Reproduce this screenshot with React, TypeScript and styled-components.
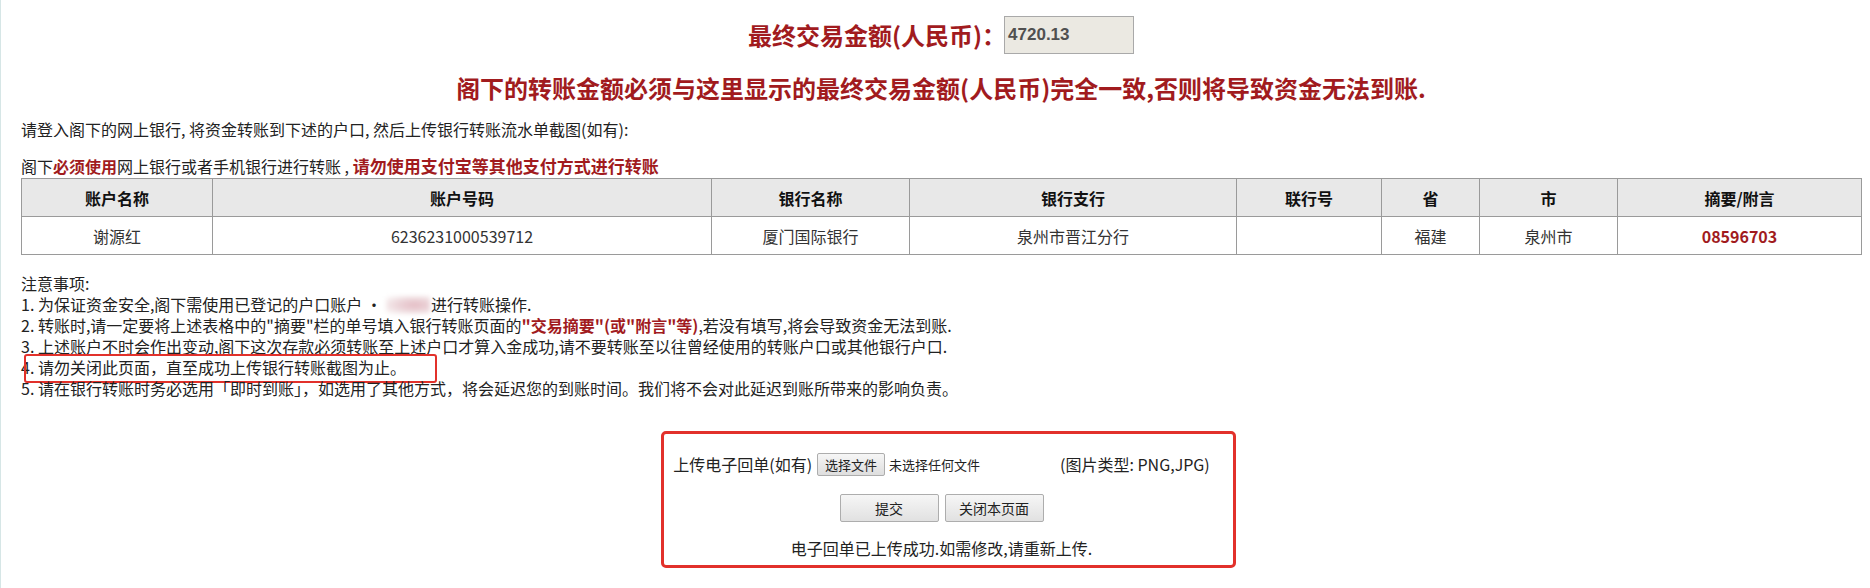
import { FC } from 'react';
import styled, { createGlobalStyle } from 'styled-components';

const GlobalStyle = createGlobalStyle`
	html,
	body {
		margin: 0;
		padding: 0;
		background: #fff;
	}

	body {
		font-family: 'Noto Sans CJK SC', 'Liberation Sans', sans-serif;
		font-size: 16px;
		color: #222;
		border-left: 1px solid #d6e6e6;
	}
`;

const RED = '#a11b1e';
const MARK = '#e2312b';

const Page = styled.div`
	padding: 16px 9px 20px 20px;
	white-space: nowrap;
`;

const TitleRow = styled.div`
	display: flex;
	justify-content: center;
	align-items: center;
	height: 38px;
`;

const TitleText = styled.h1`
	margin: 0 -2px 0 0;
	font-size: 24px;
	font-weight: 700;
	line-height: 38px;
	color: ${RED};
`;

const AmountBox = styled.div`
	box-sizing: border-box;
	width: 130px;
	height: 38px;
	display: flex;
	align-items: center;
	padding-left: 3px;
	border: 1px solid #a9a9a9;
	background: #ebe9e2;
	font-family: 'Liberation Sans', Arial, sans-serif;
	font-size: 17px;
	font-weight: 700;
	color: #505050;
`;

const Warning = styled.p`
	margin: 19px 0 0;
	text-align: center;
	font-size: 24px;
	font-weight: 700;
	line-height: 30px;
	color: ${RED};
`;

const Line = styled.p<{ $top: number }>`
	margin: ${(p) => p.$top}px 0 0;
	line-height: 21px;
`;

const Red = styled.span<{ $bold?: boolean; $size?: number }>`
	color: ${RED};
	font-weight: ${(p) => (p.$bold ? 700 : 400)};
	font-size: ${(p) => p.$size ?? 16}px;
`;

const Table = styled.table`
	width: 1840px;
	margin-top: 1px;
	border-collapse: collapse;
	table-layout: fixed;
	border: 1px solid #9a9a9a;
`;

const Col = styled.col<{ $w: number }>`
	width: ${(p) => p.$w}px;
`;

const Th = styled.th`
	height: 37px;
	padding: 0;
	border: 1px solid #9a9a9a;
	background: #e8e8e8;
	font-weight: 700;
	font-size: 16px;
	color: #111;
	text-align: center;
`;

const Td = styled.td<{ $mark?: boolean }>`
	height: 37px;
	padding: 0;
	border: 1px solid #9a9a9a;
	text-align: center;
	font-size: 16px;
	color: ${(p) => (p.$mark ? RED : '#333')};
	font-weight: ${(p) => (p.$mark ? 700 : 400)};
`;

const Notes = styled.div`
	margin-top: 18px;
	line-height: 21px;
	color: #222;
`;

const NoteLine = styled.div`
	position: relative;
	height: 21px;
`;

const Highlight = styled.span`
	position: absolute;
	left: 3px;
	top: -3px;
	width: 413px;
	height: 29px;
	box-sizing: border-box;
	border: 2px solid ${MARK};
	border-radius: 3px;
	pointer-events: none;
`;

const Blurred = styled.span`
	display: inline-block;
	width: 44px;
	height: 18px;
	vertical-align: -3px;
	margin: 0 1px 0 4px;
	background: radial-gradient(ellipse at 65% 50%, #e4bcc4 0%, #ecd6da 45%, #f5eced 75%, #fff 100%);
	filter: blur(2px);
`;

const UploadBox = styled.div`
	box-sizing: border-box;
	width: 575px;
	margin: 32px 0 0 640px;
	padding: 18px 23px 6px 9px;
	border: 3px solid ${MARK};
	border-radius: 5px;
`;

const UploadRow = styled.div`
	display: flex;
	justify-content: center;
	align-items: center;
	height: 24px;
	font-size: 16px;
`;

const FileField = styled.div`
	display: inline-flex;
	align-items: center;
	gap: 4px;
	width: 240px;
	margin: 0 3px 0 5px;
	font-size: 13px;
	color: #222;
`;

const FileButton = styled.span`
	box-sizing: border-box;
	height: 23px;
	display: inline-flex;
	align-items: center;
	padding: 0 7px;
	border: 1px solid #adadad;
	border-radius: 2px;
	background: linear-gradient(#f6f6f6, #dedede);
	font-size: 13px;
`;

const ButtonRow = styled.div`
	display: flex;
	justify-content: center;
	gap: 6px;
	margin-top: 18px;
`;

const Button = styled.button`
	width: 99px;
	height: 28px;
	border: 1px solid #adadad;
	border-radius: 2px;
	background: linear-gradient(#f6f6f6, #e1e1e1);
	font-family: 'Noto Sans CJK SC', sans-serif;
	font-size: 14px;
	color: #222;
	cursor: pointer;
`;

const Status = styled.p`
	margin: 16px 0 0;
	text-align: center;
	line-height: 21px;
`;

const columns = [
	{ title: '账户名称', width: 191, value: '谢源红' },
	{ title: '账户号码', width: 499, value: '6236231000539712' },
	{ title: '银行名称', width: 198, value: '厦门国际银行' },
	{ title: '银行支行', width: 327, value: '泉州市晋江分行' },
	{ title: '联行号', width: 145, value: '' },
	{ title: '省', width: 98, value: '福建' },
	{ title: '市', width: 138, value: '泉州市' },
	{ title: '摘要/附言', width: 244, value: '08596703', mark: true },
];

const App: FC = () => {
	return (
		<>
			<GlobalStyle />
			<Page>
				<TitleRow>
					<TitleText>最终交易金额(人民币)：</TitleText>
					<AmountBox>4720.13</AmountBox>
				</TitleRow>

				<Warning>阁下的转账金额必须与这里显示的最终交易金额(人民币)完全一致,否则将导致资金无法到账.</Warning>

				<Line $top={16}>请登入阁下的网上银行, 将资金转账到下述的户口, 然后上传银行转账流水单截图(如有):</Line>
				<Line $top={15}>
					阁下<Red $bold>必须使用</Red>网上银行或者手机银行进行转账 , <Red $bold $size={17}>请勿使用支付宝等其他支付方式进行转账</Red>
				</Line>

				<Table>
					<colgroup>
						{columns.map((c) => (
							<Col key={c.title} $w={c.width} />
						))}
					</colgroup>
					<thead>
						<tr>
							{columns.map((c) => (
								<Th key={c.title}>{c.title}</Th>
							))}
						</tr>
					</thead>
					<tbody>
						<tr>
							{columns.map((c) => (
								<Td key={c.title} $mark={c.mark}>
									{c.value}
								</Td>
							))}
						</tr>
					</tbody>
				</Table>

				<Notes>
					<NoteLine>注意事项:</NoteLine>
					<NoteLine>
						1. 为保证资金安全,阁下需使用已登记的户口账户 ·<Blurred />进行转账操作.
					</NoteLine>
					<NoteLine>
						2. 转账时,请一定要将上述表格中的"摘要"栏的单号填入银行转账页面的<Red $bold>"交易摘要"(或"附言"等)</Red>,若没有填写,将会导致资金无法到账.
					</NoteLine>
					<NoteLine>3. 上述账户不时会作出变动,阁下这次存款必须转账至上述户口才算入金成功,请不要转账至以往曾经使用的转账户口或其他银行户口.</NoteLine>
					<NoteLine>
						4. 请勿关闭此页面，直至成功上传银行转账截图为止。
						<Highlight />
					</NoteLine>
					<NoteLine>5. 请在银行转账时务必选用「即时到账」，如选用了其他方式，将会延迟您的到账时间。我们将不会对此延迟到账所带来的影响负责。</NoteLine>
				</Notes>

				<UploadBox>
					<UploadRow>
						<span>上传电子回单(如有)</span>
						<FileField>
							<FileButton>选择文件</FileButton>
							<span>未选择任何文件</span>
						</FileField>
						<span>(图片类型: PNG,JPG)</span>
					</UploadRow>
					<ButtonRow>
						<Button>提交</Button>
						<Button>关闭本页面</Button>
					</ButtonRow>
					<Status>电子回单已上传成功.如需修改,请重新上传.</Status>
				</UploadBox>
			</Page>
		</>
	);
};

export default App;
